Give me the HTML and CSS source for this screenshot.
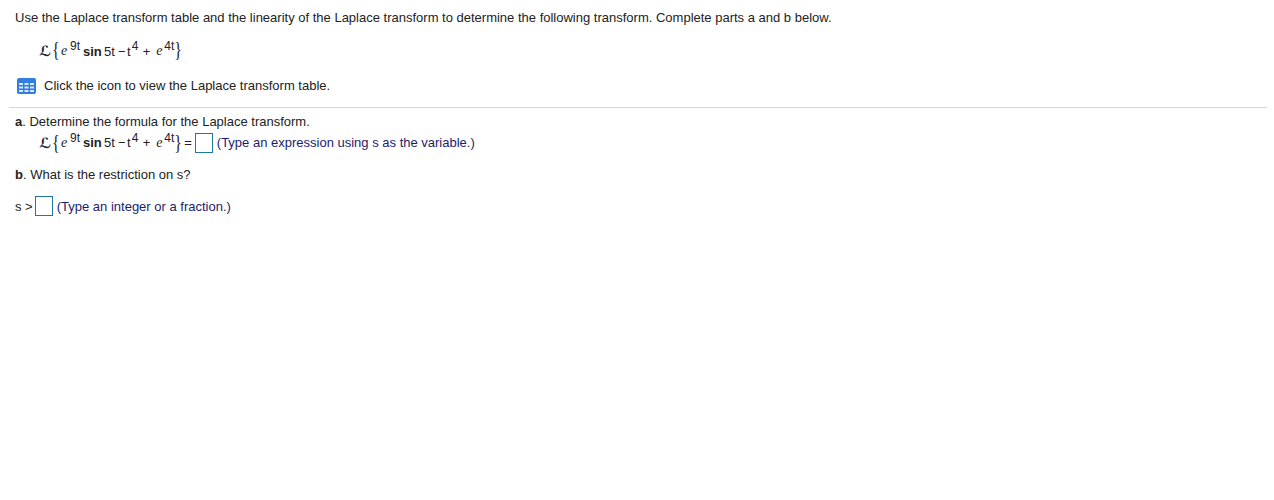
FILE: index.html
```html
<!DOCTYPE html>
<html lang="en">
  <head>
    <meta charset="UTF-8" />
    <title>Laplace Transform Question</title>
    <link rel="stylesheet" href="styles.css">
  </head>
  <body>
    <div class="question">
      <div class="instructions">
        <p class="intro">Use the Laplace transform table and the linearity of the Laplace transform to determine the following transform. Complete parts a and b below.</p>
        <div class="formula formula-top">
          <span class="script-l">ℒ</span><span class="brace">{</span><i class="e">e</i><sup class="exp-first">9t</sup><b class="sin">sin</b><span class="term">5t</span><span class="minus">−</span>t<sup class="exp-four">4</sup><span class="plus">+</span><i class="e e-last">e</i><sup class="exp-last">4t</sup><span class="brace">}</span>
        </div>
        <div class="table-link">
          <svg class="table-icon" width="19" height="16" viewBox="0 0 19 16">
            <rect x="0" y="0" width="19" height="16" rx="2" fill="#2f7ee0" />
            <path d="M2 5h4v2H2zM7.500 5h4v2h-4zM13 5h4v2h-4zM2 8.500h4v2H2zM7.500 8.500h4v2h-4zM13 8.500h4v2h-4zM2 12h4v2H2zM7.500 12h4v2h-4zM13 12h4v2h-4z" fill="#d8e8fb" />
          </svg>
          <span>Click the icon to view the Laplace transform table.</span>
        </div>
      </div>
      <div class="parts">
        <p class="part-title"><b>a</b>. Determine the formula for the Laplace transform.</p>
        <div class="formula formula-answer">
          <span class="script-l">ℒ</span><span class="brace">{</span><i class="e">e</i><sup class="exp-first">9t</sup><b class="sin">sin</b><span class="term">5t</span><span class="minus">−</span>t<sup class="exp-four">4</sup><span class="plus">+</span><i class="e e-last">e</i><sup class="exp-last">4t</sup><span class="brace">}</span>
          <span class="equals">=</span><span class="answer-box"></span><span class="hint">(Type an expression using s as the variable.)</span>
        </div>
        <p class="part-title part-b"><b>b</b>. What is the restriction on s?</p>
        <div class="restriction">
          <span class="s-label">s &gt;</span><span class="answer-box"></span><span class="hint">(Type an integer or a fraction.)</span>
        </div>
      </div>
    </div>
  </body>
</html>
```

FILE: styles.css
```css
body {
  font-family: "Liberation Sans", Arial, sans-serif;
  font-size: 13px;
  color: #222;
  background-color: white;
  margin: 0;
}
p {
  margin: 0;
}
.question {
  padding: 10px 7px 0 9px;
}
.instructions {
  padding: 0 0 13px 6px;
  border-bottom: 1px solid #d3d6db;
}
.intro {
  line-height: 15px;
}
.formula {
  display: flex;
  align-items: center;
  height: 24px;
  padding-left: 24px;
  white-space: pre;
}
.formula-top {
  margin-top: 14px;
}
.script-l {
  font-family: "DejaVu Sans", sans-serif;
  font-size: 14px;
  font-weight: bold;
  width: 13px;
}
.brace {
  font-family: "Liberation Serif", serif;
  font-size: 16px;
  line-height: 16px;
  width: 8px;
  margin-bottom: 2px;
  transform: scaleY(1.3);
}
.e {
  font-family: "Liberation Serif", serif;
  font-size: 14px;
  margin-left: 1px;
  width: 9px;
}
.e-last {
  margin-left: 6px;
  width: 8px;
}
sup {
  font-size: 12px;
  line-height: 1;
  position: relative;
  top: -5px;
  vertical-align: baseline;
}
.exp-first {
  width: 13px;
}
.exp-four {
  width: 11px;
  padding-left: 1px;
}
.exp-last {
  width: 10px;
}
.sin {
  width: 21px;
}
.term {
  width: 14px;
}
.minus {
  width: 9px;
}
.table-link {
  display: flex;
  align-items: center;
  gap: 8px;
  margin-top: 15px;
  margin-left: 2px;
  line-height: 16px;
}
.parts {
  padding: 6px 0 0 6px;
}
.part-title {
  line-height: 15px;
}
.formula-answer {
  height: 27px;
}
.equals {
  margin-left: 2px;
}
.answer-box {
  display: inline-block;
  box-sizing: border-box;
  width: 18px;
  height: 20px;
  margin-left: 3px;
  border: 1px solid #1d7a9c;
  background-color: white;
}
.restriction .answer-box {
  margin-left: 2px;
}
.hint {
  color: #1c1c6b;
  margin-left: 4px;
}
.part-b {
  margin-top: 11px;
}
.restriction {
  display: flex;
  align-items: center;
  margin-top: 14px;
  height: 20px;
}
```
